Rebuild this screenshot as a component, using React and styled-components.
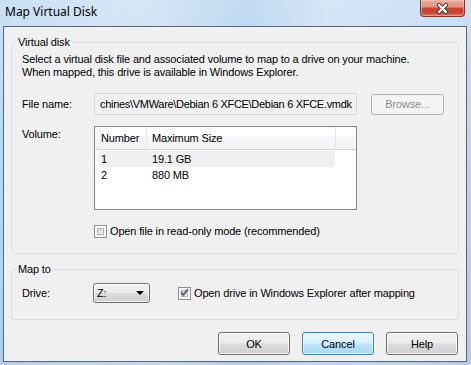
import React from 'react'
import styled, { createGlobalStyle } from 'styled-components'

const GlobalStyle = createGlobalStyle`
  html, body {
    margin: 0;
    padding: 0;
  }
  body {
    width: 471px;
    height: 365px;
    overflow: hidden;
    background: #b7d0eb;
  }
`

const Frame = styled.div`
  width: 471px;
  height: 365px;
  display: flex;
  flex-direction: column;
  background:
    linear-gradient(90deg, rgba(255,255,255,0) 0%, rgba(255,255,255,0.22) 30%, rgba(170,200,230,0.25) 52%, rgba(255,255,255,0.2) 70%, rgba(255,255,255,0) 100%),
    linear-gradient(180deg, #cbe0f5 0%, #bcd4ee 45%, #b2cce9 100%);
`

const TitleBar = styled.div`
  height: 26px;
  flex-shrink: 0;
  display: flex;
  align-items: flex-start;
  justify-content: space-between;
`

const Title = styled.div`
  font-family: "Noto Sans", "Open Sans", sans-serif;
  font-size: 12px;
  line-height: 16px;
  color: #000;
  padding: 4px 0 0 5px;
`

const CloseButton = styled.div`
  width: 45px;
  height: 17px;
  box-sizing: border-box;
  margin-right: 6px;
  border: 1px solid #8a3324;
  border-top: none;
  border-radius: 0 0 4px 4px;
  background: linear-gradient(180deg, #e9ab9c 0%, #e09583 42%, #c9452f 52%, #c74632 78%, #d9745c 100%);
  box-shadow: inset 0 0 0 1px rgba(255, 210, 200, 0.45);
  display: flex;
  align-items: center;
  justify-content: center;
`

const Body = styled.div`
  flex: 1;
  margin: 0 4px 3px 3px;
  border: 1px solid #56677a;
  background: #f0f0f0;
  padding: 9px 7px 6px 7px;
  display: flex;
  flex-direction: column;
  font-family: "Liberation Sans", Arial, sans-serif;
  font-size: 11px;
  letter-spacing: -0.15px;
  color: #000;
`

const Group = styled.fieldset`
  margin: ${p => p.$mt || 0}px 0 0 0;
  padding: 0;
  border: 1px solid #d5dfe5;
  border-radius: 3px;
  min-inline-size: 0;
`

const Legend = styled.legend`
  margin-left: 4px;
  padding: 0 2px;
  line-height: 13px;
`

const GroupContent = styled.div`
  padding: ${p => p.$pad};
  display: flex;
  flex-direction: column;
`

const Description = styled.div`
  line-height: 13px;
`

const Row = styled.div`
  display: flex;
  align-items: ${p => (p.$top ? 'flex-start' : 'center')};
  margin-top: ${p => p.$mt || 0}px;
`

const Label = styled.div`
  width: ${p => p.$w || 72}px;
  flex-shrink: 0;
  line-height: 13px;
  padding-top: ${p => p.$pt || 0}px;
`

const TextBox = styled.div`
  width: 263px;
  height: 22px;
  box-sizing: border-box;
  border: 1px solid #d2d7dd;
  border-radius: 2px;
  background: #f0f0f0;
  padding: 0 4px 0 5px;
  display: flex;
  align-items: center;
  white-space: nowrap;
  letter-spacing: -0.3px;
`

const Button = styled.div`
  width: ${p => p.$w || 72}px;
  height: ${p => p.$h || 23}px;
  box-sizing: border-box;
  flex-shrink: 0;
  border: 1px solid ${p => (p.$disabled ? '#adb2b5' : p.$default ? '#3c7fb1' : '#707070')};
  border-radius: 3px;
  background: ${p =>
    p.$disabled
      ? '#f4f4f4'
      : p.$default
      ? 'linear-gradient(180deg, #eaf6fd 0%, #d9f0fc 48%, #bee6fd 52%, #a7d9f5 100%)'
      : 'linear-gradient(180deg, #f2f2f2 0%, #ebebeb 48%, #dddddd 52%, #cfcfcf 100%)'};
  box-shadow: ${p => (p.$disabled ? 'none' : 'inset 0 0 0 1px rgba(255,255,255,0.75)')};
  color: ${p => (p.$disabled ? '#8d8d8d' : '#000')};
  margin-left: ${p => p.$ml || 0}px;
  display: flex;
  align-items: center;
  justify-content: center;
`

const ListBox = styled.div`
  width: 263px;
  height: 84px;
  box-sizing: border-box;
  border: 1px solid #828790;
  background: #fff;
`

const ListHeader = styled.div`
  height: 23px;
  box-sizing: border-box;
  display: flex;
  border-bottom: 1px solid #d5d5d5;
  background: linear-gradient(180deg, #ffffff 0%, #ffffff 40%, #f7f8f9 42%, #f1f2f4 100%);
`

const HeaderCell = styled.div`
  width: ${p => (p.$w ? `${p.$w}px` : 'auto')};
  flex: ${p => (p.$w ? 'none' : 1)};
  box-sizing: border-box;
  padding-left: ${p => p.$pl || 0}px;
  display: flex;
  align-items: center;
  border-right: ${p => (p.$last ? 'none' : '1px solid #e3e5e8')};
`

const ListRows = styled.div`
  padding: 1px 0 0 4px;
`

const ListRow = styled.div`
  width: 236px;
  height: 16px;
  display: flex;
  align-items: center;
  background: ${p => (p.$hot ? '#efefef' : 'transparent')};
`

const Cell = styled.div`
  width: ${p => (p.$w ? `${p.$w}px` : 'auto')};
  flex-shrink: 0;
  padding-left: 2px;
  box-sizing: border-box;
`

const CheckRow = styled.label`
  display: flex;
  align-items: center;
  gap: 3px;
  margin: ${p => p.$m || 0};
  line-height: 13px;
`

const CheckBox = styled.span`
  width: 13px;
  height: 13px;
  box-sizing: border-box;
  flex-shrink: 0;
  border: 1px solid #8e8f8f;
  background: #fff;
  padding: 2px;
  display: flex;
`

const CheckInner = styled.span`
  flex: 1;
  border: 1px solid #aeb3b9;
  background: linear-gradient(135deg, #cbcfd5 0%, #e6e8ea 60%, #f6f6f6 100%);
  position: relative;
`

const CheckMark = styled.svg`
  position: absolute;
  left: -2px;
  top: -3px;
`

const Combo = styled.div`
  width: 57px;
  height: 20px;
  box-sizing: border-box;
  border: 1px solid #707070;
  border-radius: 3px;
  background: linear-gradient(180deg, #f2f2f2 0%, #ebebeb 48%, #dddddd 52%, #cfcfcf 100%);
  box-shadow: inset 0 0 0 1px rgba(255,255,255,0.7);
  display: flex;
  align-items: center;
  justify-content: space-between;
  padding: 0 5px 0 3px;
`

const Arrow = styled.span`
  width: 0;
  height: 0;
  border-left: 4px solid transparent;
  border-right: 4px solid transparent;
  border-top: 4px solid #000;
`

const ButtonBar = styled.div`
  display: flex;
  justify-content: flex-end;
  gap: 12px;
  margin: 12px 1px 0 0;
`

const Check = ({ checked, children, m }) => (
  <CheckRow $m={m}>
    <CheckBox>
      <CheckInner>
        {checked && (
          <CheckMark width="9" height="9" viewBox="0 0 9 9">
            <path d="M1 4.5 L3.5 7 L8 1" fill="none" stroke="#4a5f8e" strokeWidth="1.8" />
          </CheckMark>
        )}
      </CheckInner>
    </CheckBox>
    {children}
  </CheckRow>
)

const volumes = [
  { number: '1', size: '19.1 GB', hot: true },
  { number: '2', size: '880 MB' },
]

export default function App() {
  return (
    <>
      <GlobalStyle />
      <Frame>
        <TitleBar>
          <Title>Map Virtual Disk</Title>
          <CloseButton>
            <svg width="13" height="11" viewBox="0 0 13 11">
              <path d="M3 2 L10 9 M10 2 L3 9" stroke="#4a3a3a" strokeWidth="4.2" strokeLinecap="round" />
              <path d="M3 2 L10 9 M10 2 L3 9" stroke="#fff" strokeWidth="2.2" strokeLinecap="round" />
            </svg>
          </CloseButton>
        </TitleBar>
        <Body>
          <Group>
            <Legend>Virtual disk</Legend>
            <GroupContent $pad="4px 10px 15px 10px">
              <Description>
                Select a virtual disk file and associated volume to map to a drive on your machine.
                <br />
                When mapped, this drive is available in Windows Explorer.
              </Description>
              <Row $mt={14}>
                <Label>File name:</Label>
                <TextBox>chines\VMWare\Debian 6 XFCE\Debian 6 XFCE.vmdk</TextBox>
                <Button $disabled $w={73} $h={21} $ml={14}>Browse...</Button>
              </Row>
              <Row $mt={11} $top>
                <Label $pt={2}>Volume:</Label>
                <ListBox>
                  <ListHeader>
                    <HeaderCell $w={52} $pl={6}>Number</HeaderCell>
                    <HeaderCell $w={189} $pl={5}>Maximum Size</HeaderCell>
                    <HeaderCell $last />
                  </ListHeader>
                  <ListRows>
                    {volumes.map(v => (
                      <ListRow key={v.number} $hot={v.hot}>
                        <Cell $w={51}>{v.number}</Cell>
                        <Cell>{v.size}</Cell>
                      </ListRow>
                    ))}
                  </ListRows>
                </ListBox>
              </Row>
              <Check m="15px 0 0 72px">Open file in read-only mode (recommended)</Check>
            </GroupContent>
          </Group>
          <Group $mt={9}>
            <Legend>Map to</Legend>
            <GroupContent $pad="7px 10px 16px 10px">
              <Row>
                <Label $w={71}>Drive:</Label>
                <Combo>
                  <span>Z:</span>
                  <Arrow />
                </Combo>
                <Check checked m="0 0 0 28px">Open drive in Windows Explorer after mapping</Check>
              </Row>
            </GroupContent>
          </Group>
          <ButtonBar>
            <Button>OK</Button>
            <Button $default>Cancel</Button>
            <Button>Help</Button>
          </ButtonBar>
        </Body>
      </Frame>
    </>
  )
}
